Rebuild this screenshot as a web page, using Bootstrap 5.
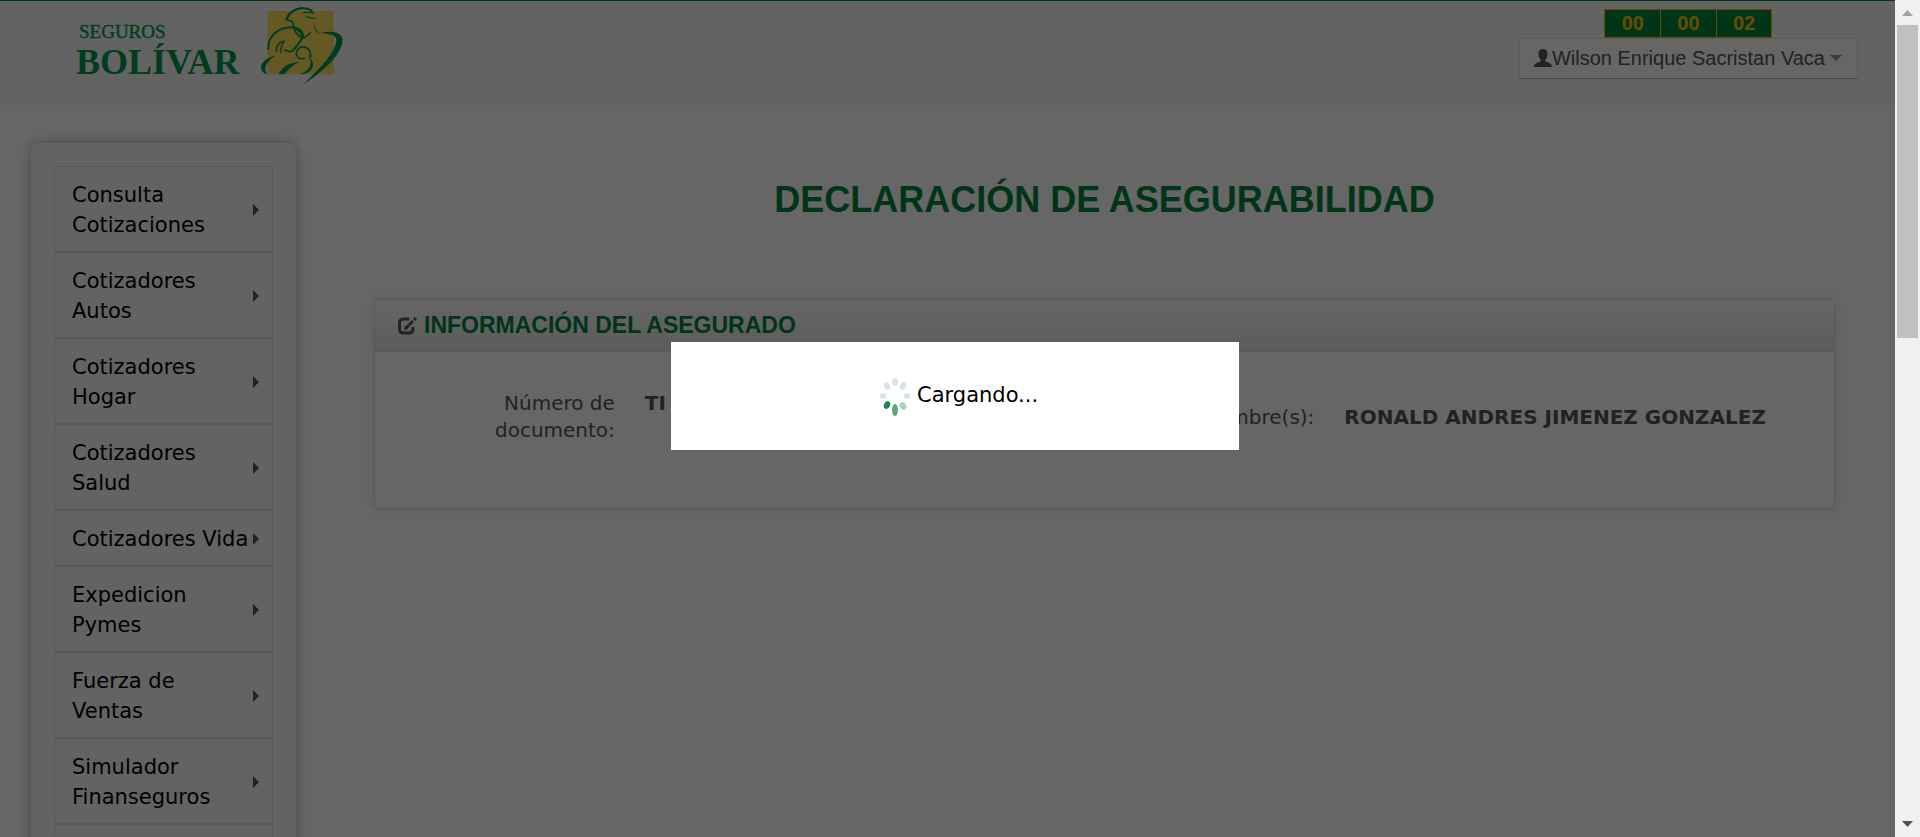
<!DOCTYPE html>
<html lang="es">
<head>
<meta charset="utf-8">
<meta name="viewport" content="width=device-width, initial-scale=1">
<title>Declaración de asegurabilidad - Seguros Bolívar</title>
<link href="https://cdn.jsdelivr.net/npm/bootstrap@5.3.0/dist/css/bootstrap.min.css" rel="stylesheet">
<style>
  :root { --sb-green: #00843d; --sb-line: #dddddd; }
  body { font-family: "DejaVu Sans", Verdana, sans-serif; color: #555; background: #fff; }
  .sans { font-family: "Liberation Sans", Arial, sans-serif; }
  .top-header { background: #f7f7f7; border-top: 1px solid var(--sb-green); height: 105px; padding: 0 37px 0 76px; }
  .brand-words { font-family: "Liberation Serif", "Times New Roman", serif; color: #009a4d; font-weight: 700; padding-top: 21px; }
  .brand-small { font-size: 19px; line-height: 20px; font-weight: 400; padding-left: 3px; -webkit-text-stroke: thin #009a4d; }
  .brand-big { font-size: 36px; line-height: 40px; }
  .timer { margin-top: 8px; width: 168px; border: 1px solid #ffc000; background: var(--sb-green); color: #ffc000; font-size: 20px; line-height: 27px; font-weight: 700; }
  .timer span + span { border-left: 1px solid #ffc000; }
  .user-btn { border: 1px solid #e4e4e4; border-bottom: 1px solid #b3b3b3; background: #fff; border-radius: 0; font-size: 20px; line-height: 24px; padding: 7px 15px 8px 14px; color: #555; box-shadow: 0 1px 2px rgba(0,0,0,.06); }
  .user-btn:hover { background: #fff; }
  .caret-sm { border: 6px solid transparent; border-top-color: #999; border-bottom: 0; margin-left: 5px; }
  .side-panel { width: 265px; margin: 38px 0 0 31px; background: #f7f7f7; border-radius: 8px; box-shadow: 0 0 12px rgba(0,0,0,.3); padding: 23px; }
  .side-link { border: 1px solid var(--sb-line); padding: 13px 13px 11px 17px; font-size: 21px; line-height: 30px; color: #000; text-decoration: none; gap: 1px; }
  .side-link::after { content: ""; border: 6px solid transparent; border-left-color: #555; border-right: 0; flex: none; }
  .main-area { padding: 38px 60px 0 78px; }
  .page-title { font-size: 36px; line-height: 40px; font-weight: 700; color: var(--sb-green); margin: 37px 0 79px; }
  .info-card { border: 1px solid var(--sb-line); border-radius: 4px; box-shadow: 0 0 12px rgba(0,0,0,.12); }
  .info-head { background: linear-gradient(#fff, #e5e5e5); border-bottom: 1px solid var(--sb-line); padding: 12px 23px; gap: 7px; }
  .info-head h2 { font-size: 23px; line-height: 27px; font-weight: 700; color: var(--sb-green); }
  .info-body { padding: 38px 20px 64px 40px; }
  .field-row { gap: 27px; margin: 0; }
  .field-row dt { width: 29%; padding-right: 3px; text-align: right; font-size: 20px; line-height: 27px; font-weight: 400; }
  .field-row dd { font-size: 20px; line-height: 27px; font-weight: 700; margin: 0; }
  .shade { inset: 0; background: rgba(0,0,0,.6); }
  .loading-box { left: 35.4%; top: 342px; width: 30%; background: #fff; color: #000; font-size: 21px; line-height: 30px; padding: 34px 0 34px 8px; gap: 6px; }
  .loading-box span { padding-bottom: 3px; }
  .scroll-strip { width: 25px; flex: none; background: #f0f0f0; padding: 10px 2px; }
  .scroll-thumb { background: #c1c1c1; width: 100%; margin: 9px 0 auto; flex: 0 1 313px; }
</style>
</head>
<body>
<div class="d-flex vh-100 overflow-hidden">
  <div class="position-relative flex-grow-1 overflow-hidden">
    <header class="top-header d-flex justify-content-between align-items-start">
      <a href="#" class="d-flex text-decoration-none" aria-label="Seguros Bolívar">
        <div class="brand-words">
          <div class="brand-small">SEGUROS</div>
          <div class="brand-big">BOLÍVAR</div>
        </div>
        <svg class="ms-3 mt-1" width="94" height="85" viewBox="-12 0 282 255" aria-hidden="true">
          <path fill="#ffdc55" d="M26 18h198v190H26z"/>
          <g fill="none" stroke="#009a4d" stroke-linecap="round" stroke-width="6">
            <path d="M83 43C91 16 128 -1 158 17" stroke-width="7"/>
            <path d="M82 42C91 51 100 43 102 55C104 79 113 92 132 99C143 96 147 90 153 84" stroke-width="5"/>
            <path d="M28 132C25 96 55 67 98 67C125 68 134 82 130 96C126 109 114 120 106 132C98 143 90 142 78 135"/>
            <path d="M104 68C119 73 130 82 133 99" stroke-width="8"/>
            <path d="M53 140C49 123 57 113 76 108M66 142C64 129 68 118 76 108" stroke-width="4"/>
            <path d="M136 160C117 166 107 148 115 135C125 120 150 124 154 144C156 151 155 156 151 158" stroke-width="5"/>
            <path d="M133 23C144 20 154 23 165 24M143 35C151 39 159 41 168 40" stroke-width="4"/>
          </g>
          <g fill="#009a4d">
            <path d="M165 51C167 67 171 78 183 87C171 83 163 69 165 51z"/>
            <path d="M184 84C211 77 245 80 250 100C254 151 184 204 133 239C173 197 230 147 232 105C232 88 209 87 184 84z"/>
            <path d="M52 150C22 158 3 175 6 191C9 202 17 207 26 208C10 190 23 168 52 150z"/>
            <path d="M58 208C72 183 92 171 124 172C101 177 89 194 76 208z"/>
            <path d="M153 158C172 177 163 207 121 208C151 198 158 181 153 158z"/>
          </g>
        </svg>
      </a>
      <div class="d-flex flex-column align-items-center sans">
        <div class="timer d-flex text-center" role="timer"><span class="flex-fill">00</span><span class="flex-fill">00</span><span class="flex-fill">02</span></div>
        <button type="button" class="btn user-btn d-flex align-items-center">
          <svg width="18" height="18" viewBox="0 0 19 19" aria-hidden="true"><path fill="#555" d="M9.500 0C6.500 0 4.700 2 4.700 5C4.700 7.500 5.500 9.500 7 11v2C4 14.300 0 15 0 19h19c0-4-4-4.700-7-6v-2c1.500-1.500 2.300-3.500 2.300-6C14.300 2 12.500 0 9.500 0z"/></svg>
          <span>Wilson Enrique Sacristan Vaca</span><span class="caret-sm"></span>
        </button>
      </div>
    </header>

    <div class="d-flex align-items-start">
      <nav class="side-panel flex-shrink-0 d-flex flex-column" aria-label="Menú principal">
        <a class="side-link d-flex align-items-center justify-content-between" href="#">Consulta Cotizaciones</a>
        <a class="side-link d-flex align-items-center justify-content-between" href="#">Cotizadores Autos</a>
        <a class="side-link d-flex align-items-center justify-content-between" href="#">Cotizadores Hogar</a>
        <a class="side-link d-flex align-items-center justify-content-between" href="#">Cotizadores Salud</a>
        <a class="side-link d-flex align-items-center justify-content-between" href="#">Cotizadores Vida</a>
        <a class="side-link d-flex align-items-center justify-content-between" href="#">Expedicion Pymes</a>
        <a class="side-link d-flex align-items-center justify-content-between" href="#">Fuerza de Ventas</a>
        <a class="side-link d-flex align-items-center justify-content-between" href="#">Simulador Finanseguros</a>
        <a class="side-link d-flex align-items-center justify-content-between" href="#" aria-label="Más opciones">&nbsp;</a>
      </nav>

      <main class="main-area flex-grow-1">
        <h1 class="page-title sans text-center">DECLARACIÓN DE ASEGURABILIDAD</h1>
        <section class="info-card">
          <div class="info-head d-flex align-items-center">
            <svg width="19" height="18" viewBox="0 0 19 18" fill="none" stroke="#555" aria-hidden="true"><path stroke-width="3" d="M11 2H5.500Q1.500 2 1.500 6v6q0 4 4 4H11q4 0 4-4V10"/><path stroke-width="3" d="M8 11l7-7"/><path stroke-width="3" d="M16 3l2-2"/><path fill="#555" stroke="none" d="M6 13l1-4 3 3z"/></svg>
            <h2 class="sans mb-0">INFORMACIÓN DEL ASEGURADO</h2>
          </div>
          <div class="info-body">
            <div class="row g-0">
              <dl class="col-6 d-flex align-items-start field-row"><dt>Número de documento:</dt><dd>TI</dd></dl>
              <dl class="col-6 d-flex align-items-center field-row"><dt>Nombre(s):</dt><dd>RONALD ANDRES JIMENEZ GONZALEZ</dd></dl>
            </div>
          </div>
        </section>
      </main>
    </div>

    <div class="shade position-absolute"></div>
    <div class="loading-box position-absolute d-flex align-items-center justify-content-center" role="status">
      <svg width="31" height="40" viewBox="0 0 31 40" aria-hidden="true">
        <g fill="#d3e9dc">
          <ellipse cx="15" cy="6" rx="3" ry="4"/><ellipse cx="23" cy="10" rx="3" ry="4" transform="rotate(25 23 10)"/>
          <ellipse cx="27" cy="20" rx="3" ry="3"/><ellipse cx="3" cy="20" rx="3" ry="3"/>
          <ellipse cx="7" cy="10" rx="3" ry="4" transform="rotate(-25 7 10)"/>
        </g>
        <ellipse cx="23" cy="30" rx="3" ry="4" fill="#a9d3bb" transform="rotate(-30 23 30)"/>
        <ellipse cx="15" cy="34" rx="3" ry="6" fill="#55ab79"/>
        <ellipse cx="7" cy="29" rx="3" ry="4" fill="#188c49" transform="rotate(25 7 29)"/>
      </svg>
      <span>Cargando...</span>
    </div>
  </div>

  <div class="scroll-strip d-flex flex-column align-items-center" aria-hidden="true">
    <svg class="flex-shrink-0" width="11" height="6" viewBox="0 0 11 6"><path fill="#a3a3a3" d="M0 6L5.500 0 11 6z"/></svg>
    <div class="scroll-thumb"></div>
    <svg class="flex-shrink-0" width="11" height="6" viewBox="0 0 11 6"><path fill="#505050" d="M0 0h11L5.500 6z"/></svg>
  </div>
</div>
<script src="https://cdn.jsdelivr.net/npm/bootstrap@5.3.0/dist/js/bootstrap.bundle.min.js"></script>
</body>
</html>
